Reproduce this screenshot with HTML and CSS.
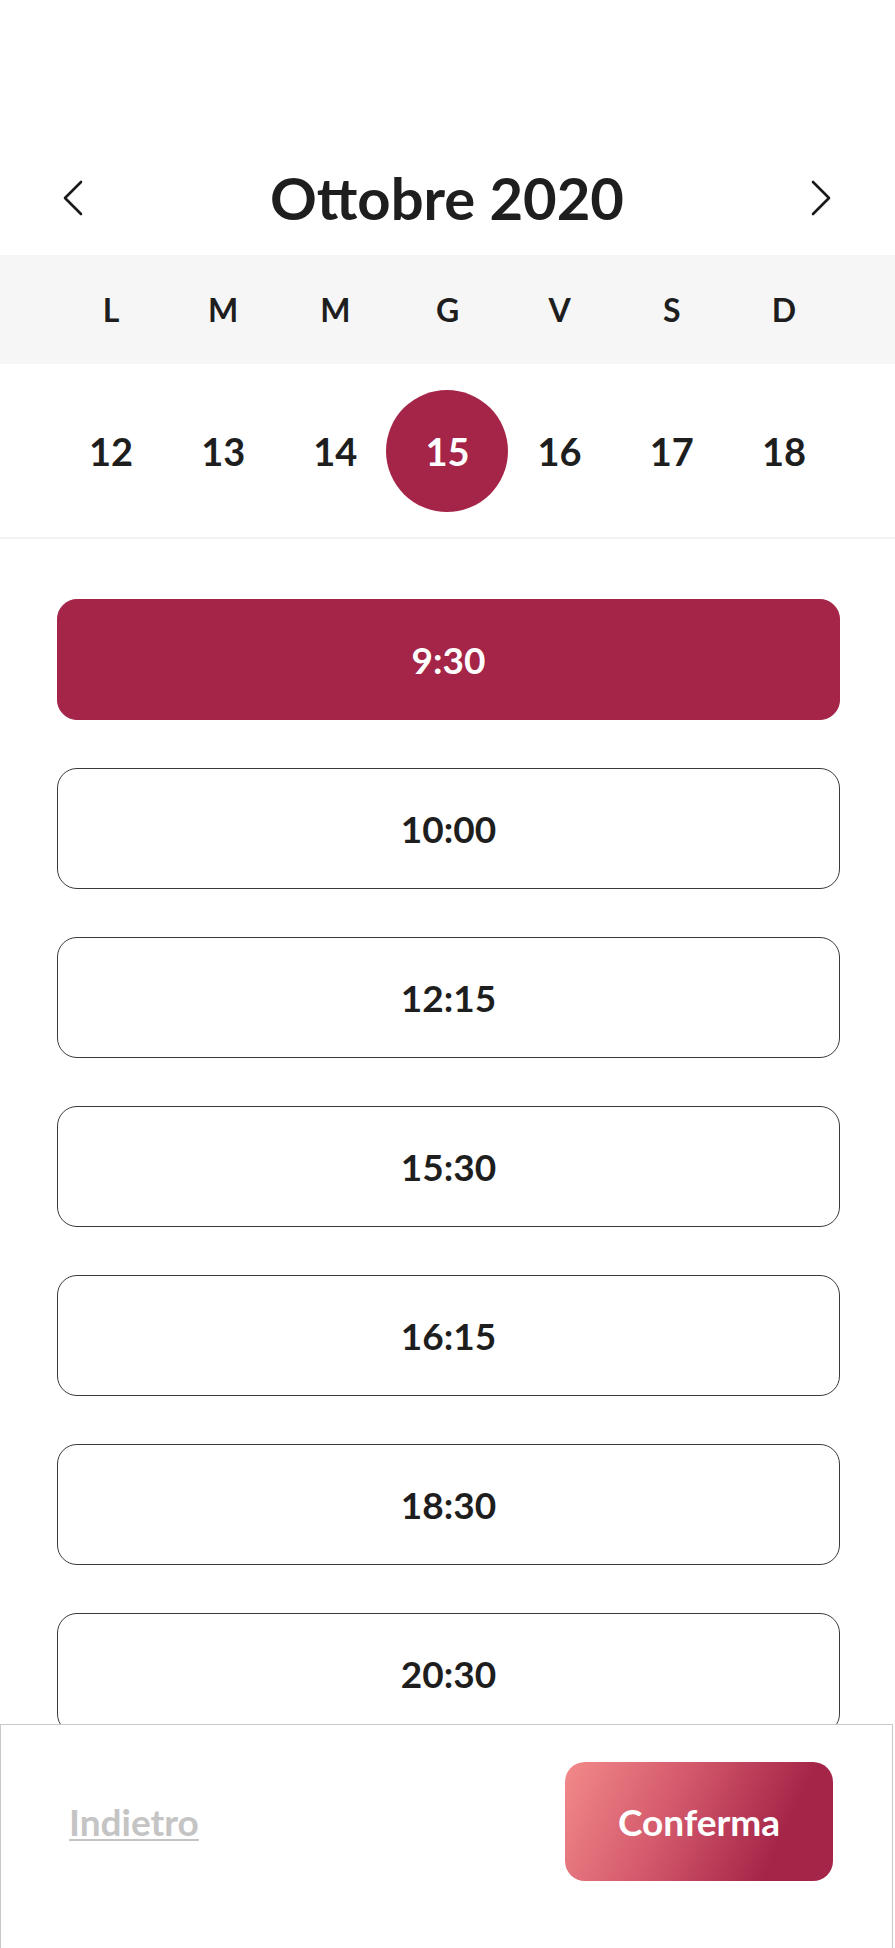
FILE: index.html
```html
<!DOCTYPE html>
<html lang="it">
<head>
<meta charset="utf-8">
<title>Prenotazione</title>
<link rel="stylesheet" href="styles.css">
</head>
<body>
<main class="page">
  <header class="month-bar">
    <button class="nav-btn" aria-label="Mese precedente">
      <svg width="22" height="36" viewBox="0 0 22 36"><path d="M19 2 L3 18 L19 34" fill="none" stroke="#1a1a1a" stroke-width="2.6" stroke-linecap="round" stroke-linejoin="round"/></svg>
    </button>
    <h1 class="month-title">Ottobre 2020</h1>
    <button class="nav-btn" aria-label="Mese successivo">
      <svg width="22" height="36" viewBox="0 0 22 36"><path d="M3 2 L19 18 L3 34" fill="none" stroke="#1a1a1a" stroke-width="2.6" stroke-linecap="round" stroke-linejoin="round"/></svg>
    </button>
  </header>

  <div class="weekdays">
    <span>L</span><span>M</span><span>M</span><span>G</span><span>V</span><span>S</span><span>D</span>
  </div>

  <div class="dates">
    <span class="date">12</span>
    <span class="date">13</span>
    <span class="date">14</span>
    <span class="date selected">15</span>
    <span class="date">16</span>
    <span class="date">17</span>
    <span class="date">18</span>
  </div>

  <section class="slots">
    <button class="slot active">9:30</button>
    <button class="slot">10:00</button>
    <button class="slot">12:15</button>
    <button class="slot">15:30</button>
    <button class="slot">16:15</button>
    <button class="slot">18:30</button>
    <button class="slot">20:30</button>
  </section>
</main>

<footer class="actions">
  <a class="back-link" href="#">Indietro</a>
  <button class="confirm-btn">Conferma</button>
</footer>
</body>
</html>
```

FILE: styles.css
```css
* { box-sizing: border-box; }

html, body {
  margin: 0;
  padding: 0;
  background: #ffffff;
  font-family: "Lato", "Noto Sans", "Liberation Sans", sans-serif;
  color: #1e1e1e;
}

body {
  height: 1948px;
  overflow: hidden;
}

.page {
  padding-top: 140px;
}

.month-bar {
  height: 115px;
  display: flex;
  align-items: center;
  justify-content: space-between;
  padding: 0 63px 0 62px;
}

.nav-btn {
  background: none;
  border: 0;
  padding: 0;
  display: flex;
  align-items: center;
  justify-content: center;
  width: 22px;
  height: 36px;
}

.month-title {
  margin: 0;
  font-size: 58px;
  font-weight: 700;
  line-height: 1;
  color: #1e1e1e;
  letter-spacing: 0;
}

.weekdays {
  height: 109px;
  background: #f6f6f6;
  display: grid;
  grid-template-columns: repeat(7, minmax(0, 1fr));
  align-items: center;
  padding: 0 55px;
  font-size: 32px;
  font-weight: 700;
  text-align: center;
  color: #1e1e1e;
}

.dates {
  height: 175px;
  display: grid;
  grid-template-columns: repeat(7, minmax(0, 1fr));
  align-items: center;
  justify-items: center;
  padding: 0 55px;
  border-bottom: 2px solid #f2f2f2;
}

.date {
  width: 122px;
  height: 122px;
  margin: 0 -5px;
  border-radius: 50%;
  display: flex;
  align-items: center;
  justify-content: center;
  font-size: 38px;
  font-weight: 700;
  color: #1e1e1e;
}

.date.selected {
  background: #a52548;
  color: #ffffff;
}

.slots {
  display: flex;
  flex-direction: column;
  gap: 48px;
  padding: 60px 55px 0 57px;
}

.slot {
  height: 121px;
  width: 100%;
  border: 1.3px solid #3a3a3a;
  border-radius: 20px;
  background: #ffffff;
  font-family: inherit;
  font-size: 37px;
  font-weight: 700;
  color: #1e1e1e;
  padding: 0;
}

.slot.active {
  background: #a52548;
  border-color: #a52548;
  color: #ffffff;
}

.actions {
  position: fixed;
  left: 0;
  right: 2px;
  bottom: 0;
  height: 224px;
  background: #ffffff;
  border: 1.5px solid #c9c9c9;
  border-bottom: 0;
  display: flex;
  align-items: flex-start;
  justify-content: space-between;
  padding: 37px 59px 0 68px;
}

.back-link {
  height: 119px;
  display: flex;
  align-items: center;
  font-size: 37px;
  font-weight: 700;
  color: #c4c4c4;
  text-decoration: underline;
  text-decoration-thickness: 2px;
  text-underline-offset: 3px;
}

.confirm-btn {
  width: 268px;
  height: 119px;
  border: 0;
  border-radius: 20px;
  background: linear-gradient(115deg, #f28a8a 0%, #d3586b 40%, #a52548 78%, #a52548 100%);
  color: #ffffff;
  font-family: inherit;
  font-size: 37px;
  font-weight: 700;
  padding: 0;
}
```
